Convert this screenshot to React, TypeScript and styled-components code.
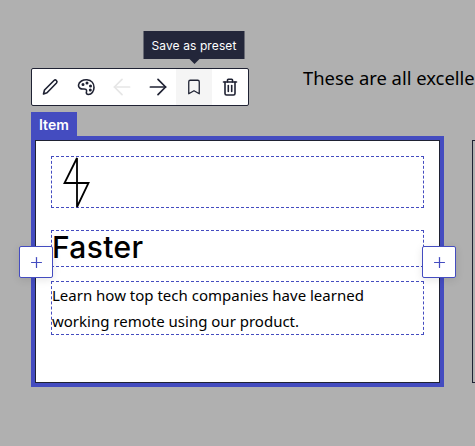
import styled, { createGlobalStyle } from "styled-components";
import { ArrowLeft, ArrowRight, Bookmark, Plus } from "lucide-react";

const GlobalStyle = createGlobalStyle`
    html, body {
        margin: 0;
        padding: 0;
    }
    * {
        box-sizing: border-box;
    }
`

// hand drawn, the icon packs have nothing with these outlines
const PencilIcon = () => (
    <svg width="24" height="24" viewBox="0 0 24 24" fill="none" stroke="currentColor" strokeWidth="1.6" strokeLinejoin="round" strokeLinecap="round">
        <path d="M5.5 19 L6.5 15 L16 5.5 Q17.2 4.4 18.4 5.5 Q19.6 6.8 18.5 8 L9 17.8 Z" />
    </svg>
)

const PaletteIcon = () => (
    <svg width="24" height="24" viewBox="0 0 24 24" fill="none" stroke="currentColor" strokeWidth="1.6" strokeLinejoin="round" strokeLinecap="round">
        <path d="M4.5 10 C5 6.5 9 4.5 13 4.8 C17.5 5.2 20 8.5 20 12.5 C20 16.5 17.5 19.5 14.5 19.5 C12.5 19.5 12 18.2 12.5 16.5 C13 14.5 11.5 13.8 9.5 14 C7 14.3 4.2 13 4.5 10 Z" />
        <circle cx="9" cy="9.5" r="0.7" fill="currentColor" />
        <circle cx="13" cy="8" r="0.7" fill="currentColor" />
        <circle cx="16.5" cy="11" r="0.7" fill="currentColor" />
        <circle cx="16.3" cy="15" r="0.7" fill="currentColor" />
    </svg>
)

const TrashIcon = () => (
    <svg width="24" height="24" viewBox="0 0 24 24" fill="none" stroke="currentColor" strokeWidth="1.6" strokeLinejoin="round" strokeLinecap="round">
        <path d="M5.5 7 H18.5" />
        <path d="M9.5 7 V5 Q9.5 4.2 10.3 4.2 H13.7 Q14.5 4.2 14.5 5 V7" />
        <path d="M7 7 V18.5 Q7 20 8.5 20 H15.5 Q17 20 17 18.5 V7" />
        <path d="M10.3 10.5 V16.5" />
        <path d="M13.7 10.5 V16.5" />
    </svg>
)

const Tools = [
    { key: "edit", icon: <PencilIcon /> },
    { key: "style", icon: <PaletteIcon /> },
    { key: "prev", icon: <ArrowLeft size={26} strokeWidth={1.6} />, disabled: true },
    { key: "next", icon: <ArrowRight size={26} strokeWidth={1.6} /> },
    { key: "save", icon: <Bookmark size={18} strokeWidth={1.7} />, active: true, tip: "Save as preset" },
    { key: "delete", icon: <TrashIcon /> },
]

export default function App() {
    return (
        <Page>
            <GlobalStyle />
            <TopRow>
                <Toolbar>
                    {Tools.map(t => (
                        <ToolButton key={t.key} $active={t.active} $disabled={t.disabled}>
                            {t.icon}
                            {t.tip && <Tooltip>{t.tip}</Tooltip>}
                        </ToolButton>
                    ))}
                </Toolbar>
                <Intro>These are all excellent reasons to switch</Intro>
            </TopRow>

            <ItemTab>Item</ItemTab>
            <CardsRow>
                <SelectedFrame>
                    <Card>
                        <IconSlot>
                            <svg width="28" height="52" viewBox="0 0 28 52" fill="none" stroke="#000" strokeWidth="1.8">
                                <path d="M14 1 L1.5 26 H25.5 L14 50 Z" />
                            </svg>
                        </IconSlot>
                        <TitleSlot>Faster</TitleSlot>
                        <TextSlot>Learn how top tech companies have learned working remote using our product.</TextSlot>
                    </Card>
                    <AddButton $side="left"><Plus size={17} strokeWidth={1.75} /></AddButton>
                    <AddButton $side="right"><Plus size={17} strokeWidth={1.75} /></AddButton>
                </SelectedFrame>
                <NextCard />
            </CardsRow>
        </Page>
    )
}

const Page = styled.div`
    width: 475px;
    height: 446px;
    overflow: hidden;
    background-color: #b0b0b0;
    padding: 68px 0 0 31px;
    font-family: 'Noto Sans', sans-serif;
    color: #000;
`

const TopRow = styled.div`
    display: flex;
    align-items: flex-start;
    gap: 54px;
    width: 1000px;
`

const Toolbar = styled.div`
    display: flex;
    flex-shrink: 0;
    width: 218px;
    height: 38px;
    background-color: #fff;
    border: 1px solid #1f2233;
    border-radius: 2px;
`

const ToolButton = styled.div<{ $active?: boolean; $disabled?: boolean }>`
    position: relative;
    width: 36px;
    height: 36px;
    display: flex;
    align-items: center;
    justify-content: center;
    color: ${p => p.$disabled ? "#e6e6e6" : "#1f2233"};
    background-color: ${p => p.$active ? "#f5f5f5" : "transparent"};
`

const Tooltip = styled.div`
    position: absolute;
    bottom: 46px;
    left: 50%;
    transform: translateX(-50%);
    width: 101px;
    height: 28px;
    display: flex;
    align-items: center;
    justify-content: center;
    background-color: #23263a;
    color: #fff;
    font-family: 'Inter', sans-serif;
    font-size: 12px;
    letter-spacing: 0.1px;
    white-space: nowrap;

    &::after {
        content: "";
        position: absolute;
        top: 100%;
        left: 50%;
        margin-left: -5px;
        border-left: 5px solid transparent;
        border-right: 5px solid transparent;
        border-top: 5px solid #23263a;
    }
`

const Intro = styled.p`
    margin: 0;
    font-size: 18.4px;
    line-height: 20px;
    white-space: nowrap;
`

const ItemTab = styled.div`
    margin-top: 6px;
    width: 46px;
    height: 24px;
    padding-left: 8px;
    background-color: #444cc0;
    color: #fff;
    font-family: 'Inter', sans-serif;
    font-size: 14px;
    font-weight: 600;
    line-height: 25px;
`

const CardsRow = styled.div`
    display: flex;
    gap: 28px;
    width: 1000px;
`

const SelectedFrame = styled.div`
    position: relative;
    width: 413px;
    height: 251px;
    flex-shrink: 0;
    border: 4px solid #444cc0;
`

const Card = styled.div`
    height: 100%;
    background-color: #fff;
    border: 1px solid #1f2233;
    padding: 15px 15px 0;
    display: flex;
    flex-direction: column;
`

const Slot = styled.div`
    border: 1px dashed #444cc0;
`

const IconSlot = styled(Slot)`
    height: 52px;
    padding-left: 11px;
    svg {
        display: block;
    }
`

const TitleSlot = styled(Slot)`
    margin-top: 22px;
    height: 37px;
    font-family: 'Inter', sans-serif;
    font-size: 30px;
    line-height: 32px;
    font-weight: 500;
    letter-spacing: 0.35px;
`

const TextSlot = styled(Slot)`
    margin-top: 14px;
    height: 54px;
    font-size: 15px;
    line-height: 26px;
`

const AddButton = styled.div<{ $side: "left" | "right" }>`
    position: absolute;
    top: 106px;
    ${p => p.$side === "left" ? "left: -16px;" : "right: -16px;"}
    width: 34px;
    height: 32px;
    display: flex;
    align-items: center;
    justify-content: center;
    background-color: #fff;
    border: 1px solid #444cc0;
    border-radius: 2px;
    color: #444cc0;
    box-shadow: 0 2px 8px rgba(0, 0, 0, 0.1);
`

const NextCard = styled.div`
    margin-top: 4px;
    width: 300px;
    height: 243px;
    flex-shrink: 0;
    border: 1px solid #1f2233;
`
